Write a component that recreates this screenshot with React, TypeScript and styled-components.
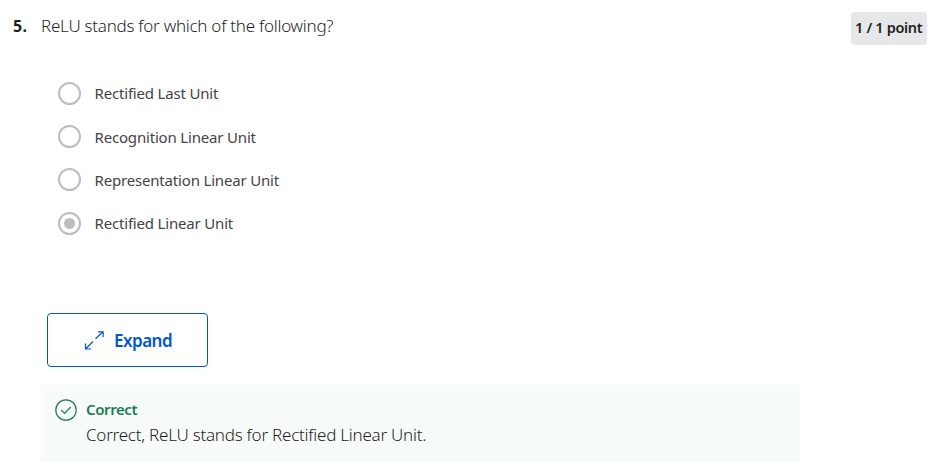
import React from "react";
import styled, { createGlobalStyle } from "styled-components";

const GlobalStyle = createGlobalStyle`
  * { box-sizing: border-box; }
  body {
    margin: 0;
    background: #fff;
    color: #1f1f1f;
    font-family: "Noto Sans", "Open Sans", sans-serif;
  }
`;

const Page = styled.main`
  height: 469px;
  padding: 12px 13px 0;
  overflow: hidden;
`;

const Header = styled.header`
  display: flex;
  align-items: flex-start;
  height: 59.6px;
`;

const Line = styled.span<{ $size: number; $weight?: number; $spacing?: number; $color?: string }>`
  display: block;
  white-space: nowrap;
  font-size: ${(p) => p.$size}px;
  font-weight: ${(p) => p.$weight ?? 300};
  letter-spacing: ${(p) => p.$spacing ?? 0}px;
  color: ${(p) => p.$color ?? "inherit"};
  line-height: 26px;
`;

const QuestionNumber = styled.div`
  width: 28px;
  padding-top: 1px;
`;

const Prompt = styled.div`
  flex: 1;
  padding-top: 1px;
`;

const Points = styled.div`
  display: flex;
  align-items: flex-start;
  width: 76px;
  height: 33px;
  padding: 2px 0 0 4px;
  border-radius: 4px;
  background: #e5e7e8;
`;

const Options = styled.div`
  display: grid;
  grid-auto-rows: 43.35px;
  margin-left: 45px;
`;

const Option = styled.label`
  display: flex;
  align-items: center;
  gap: 13.5px;
`;

const Radio = styled.span<{ $checked: boolean }>`
  display: grid;
  place-items: center;
  width: 23px;
  height: 23px;
  border: 2px solid #bdbdbd;
  border-radius: 50%;

  &::after {
    content: "";
    width: 11px;
    height: 11px;
    border-radius: 50%;
    background: ${(p) => (p.$checked ? "#bdbdbd" : "transparent")};
  }
`;

const ExpandButton = styled.button`
  display: flex;
  align-items: center;
  gap: 9px;
  width: 161px;
  height: 54px;
  margin: 68px 0 0 34px;
  padding: 3px 0 0 36px;
  border: 1px solid #0056d2;
  border-radius: 4px;
  background: #fff;
  color: #0056d2;
  font-family: inherit;
`;

const Feedback = styled.section`
  display: flex;
  gap: 9px;
  width: 759px;
  height: 77px;
  margin: 18px 0 0 28px;
  padding: 11px 14px;
  background: #f7fbf9;
`;

const StatusIcon = styled.svg`
  flex: none;
  margin-top: 3px;
`;

const OPTIONS = [
  "Rectified Last Unit",
  "Recognition Linear Unit",
  "Representation Linear Unit",
  "Rectified Linear Unit",
];

export default function App() {
  return (
    <Page>
      <GlobalStyle />
      <Header>
        <QuestionNumber>
          <Line $size={16} $weight={700} $spacing={0.3}>5.</Line>
        </QuestionNumber>
        <Prompt>
          <Line $size={17} $spacing={-0.26}>ReLU stands for which of the following?</Line>
        </Prompt>
        <Points>
          <Line $size={14.5} $weight={600} $spacing={-0.33}>1 / 1 point</Line>
        </Points>
      </Header>
      <Options>
        {OPTIONS.map((label, index) => (
          <Option key={label}>
            <Radio $checked={index === 3} />
            <Line $size={15} $weight={400} $spacing={-0.18} $color="#444">{label}</Line>
          </Option>
        ))}
      </Options>
      <ExpandButton>
        <svg width="21" height="21" viewBox="0 0 21 21" fill="none" stroke="currentColor" strokeWidth="1.2">
          <path d="M11.5 7.8 19 .8M14 .8h5.2V6M9 10.5 1.5 18M1.5 12.5V18H7" />
        </svg>
        <Line $size={17} $weight={600} $spacing={-0.5}>Expand</Line>
      </ExpandButton>
      <Feedback>
        <StatusIcon width="22" height="22" viewBox="0 0 22 22" fill="none" stroke="#1d7c50" strokeWidth="1.2">
          <circle cx="11" cy="11" r="10.2" />
          <path d="m6.2 11 3.5 3.5 6-6.5" />
        </StatusIcon>
        <div>
          <Line $size={15} $weight={600} $spacing={-0.4} $color="#1d7c50">Correct</Line>
          <Line $size={17} $spacing={-0.24}>Correct, ReLU stands for Rectified Linear Unit.</Line>
        </div>
      </Feedback>
    </Page>
  );
}
